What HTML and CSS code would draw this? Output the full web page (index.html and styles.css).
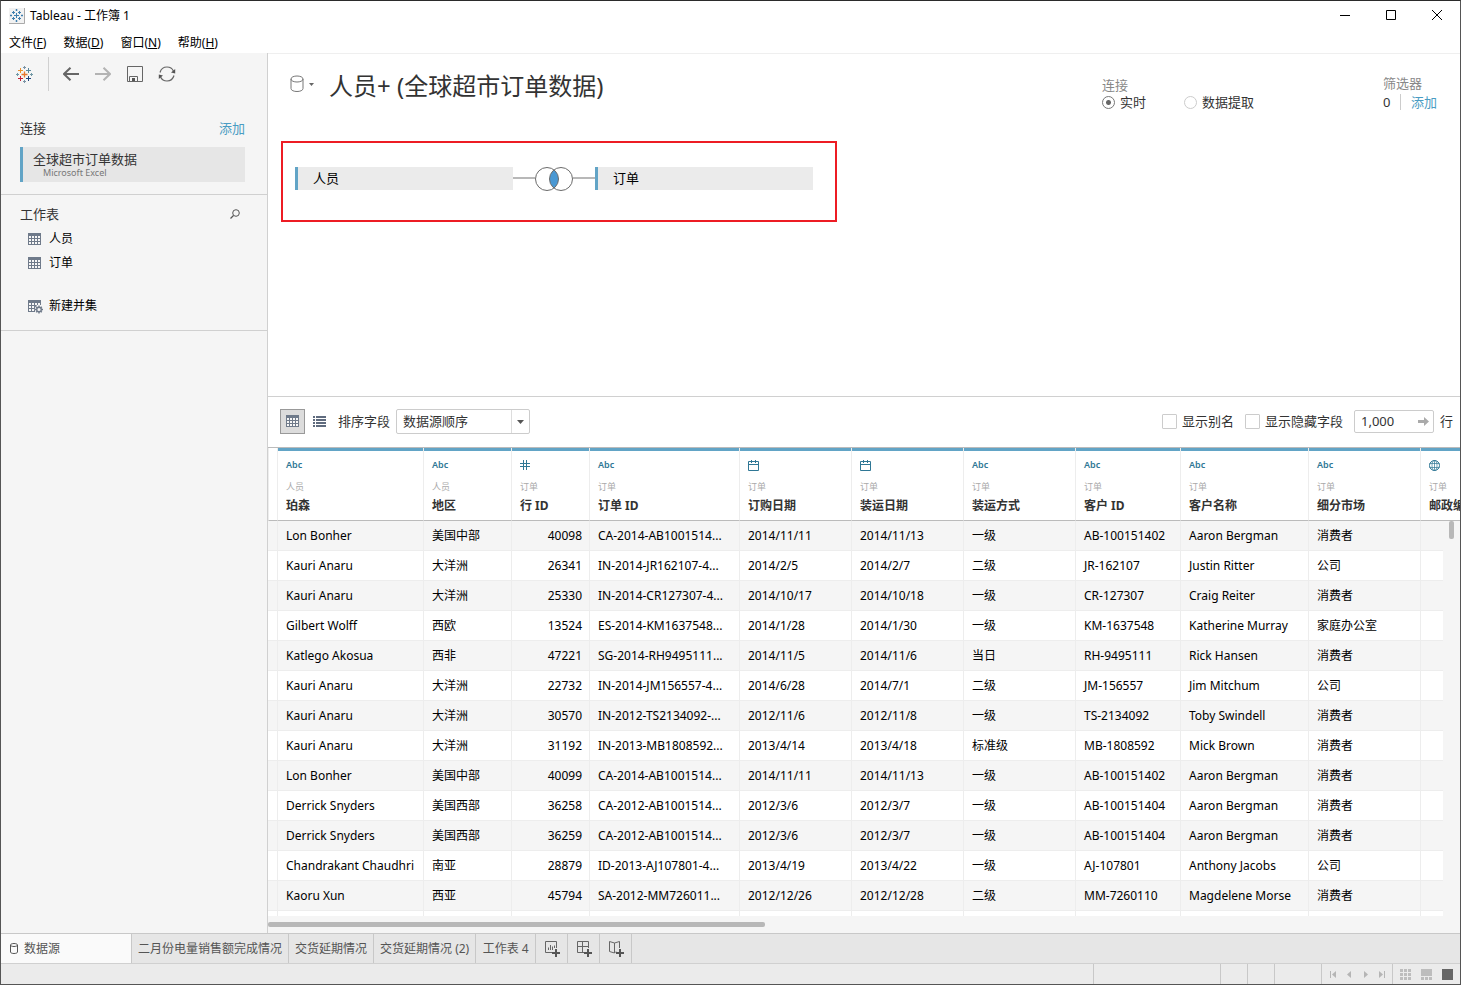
FILE: index.html
```html
<!DOCTYPE html>
<html lang="zh-CN">
<head>
    <meta charset="utf-8">
    <title>Tableau - 工作簿 1</title>
    <link rel="stylesheet" href="styles.css">
</head>
<body>
<svg class="defs" width="0" height="0">
    <symbol id="i-grid" viewBox="0 0 13 12"><path d="M0 0h13v12H0z" fill="#6f7a8a"/><path d="M1 3h2v2H1zM4 3h2v2H4zM7 3h2v2H7zM10 3h2v2h-2zM1 6h2v2H1zM4 6h2v2H4zM7 6h2v2H7zM10 6h2v2h-2zM1 9h2v2H1zM4 9h2v2H4zM7 9h2v2H7zM10 9h2v2h-2z" fill="#f7f7f7"/></symbol>
    <symbol id="i-db" viewBox="0 0 14 18"><path d="M1 4v9.500c0 4 12 4 12 0V4M1 4c0-4 12-4 12 0s-12 4-12 0z" fill="none" stroke="#777"/></symbol>
    <symbol id="i-cal" viewBox="0 0 11 11"><path d="M.5 1.500h10v9H.5zM.5 4.500h10M3.500 0v3M7.500 0v3" fill="none" stroke="#2f7795"/></symbol>
</svg>

<div class="window">
    <header class="titlebar">
        <svg class="app-icon" width="16" height="16" viewBox="0 0 16 16"><path d="M0 0h16v16H0z" fill="#f2f2f2"/><path d="M15.500 0v15.500H0" fill="none" stroke="#aaa"/><path d="M7.500 5v5M5 7.500h5M4.500 3v3M3 4.500h3M10.500 3v3M9 4.500h3M4.500 9v3M3 10.500h3M10.500 9v3M9 10.500h3M7.500 1v2M6.500 2h2M7.500 12v2M6.500 13h2M1 7.500h2M2 6.500v2M12 7.500h2M13 6.500v2" stroke="#3f7fae" fill="none"/></svg>
        <span class="app-title">Tableau - 工作簿 1</span>
        <div class="win-buttons">
            <button aria-label="最小化"><svg width="10" height="10"><path d="M0 5.500h10" stroke="#000"/></svg></button>
            <button aria-label="最大化"><svg width="10" height="10"><path d="M.5.5h9v9h-9z" stroke="#000" fill="none"/></svg></button>
            <button aria-label="关闭"><svg width="10" height="10"><path d="M0 0l10 10M10 0L0 10" stroke="#000"/></svg></button>
        </div>
    </header>

    <nav class="menubar">
        <button>文件(<u>F</u>)</button>
        <button>数据(<u>D</u>)</button>
        <button>窗口(<u>N</u>)</button>
        <button>帮助(<u>H</u>)</button>
    </nav>

    <main class="main">
        <aside class="sidebar">
            <div class="toolbar">
                <button class="logo" aria-label="开始"><svg width="17" height="17" viewBox="0 0 17 17" fill="none" stroke-width="1"><path d="M8.500 5.500v6M5.500 8.500h6" stroke="#e8762d" stroke-width="1.300"/><path d="M4.500 2v5M2 4.500h5" stroke="#eb912c"/><path d="M12.500 2v5M10 4.500h5" stroke="#59879b"/><path d="M4.500 10v5M2 12.500h5" stroke="#c72035"/><path d="M12.500 10v5M10 12.500h5" stroke="#1f457e"/><path d="M8.500 0v3M7 1.500h3M8.500 14v3M7 15.500h3" stroke="#7b94a6"/><path d="M1.500 7v3M0 8.500h3M15.500 7v3M14 8.500h3" stroke="#7199a6"/></svg></button>
                <button class="tool" aria-label="后退"><svg width="16" height="14" viewBox="0 0 16 14"><path d="M16 7H1M7.500.7L1 7l6.500 6.300" fill="none" stroke="#666" stroke-width="2"/></svg></button>
                <button class="tool" aria-label="前进"><svg width="16" height="14" viewBox="0 0 16 14"><path d="M0 7h15M8.500.7L15 7l-6.500 6.300" fill="none" stroke="#b3b3b3" stroke-width="2"/></svg></button>
                <button class="tool" aria-label="保存"><svg width="16" height="16" viewBox="0 0 16 16"><path d="M.5.5h15v15H.5zM2.500 15.500v-5h8v5" fill="none" stroke="#666"/><path d="M5 12h3v3H5z" fill="#555"/></svg></button>
                <button class="tool" aria-label="刷新"><svg width="18" height="16" viewBox="0 0 18 16"><path d="M2 6.500C3 3 6 1 9 1c3 0 5.300 1.400 6.400 4M16 9.500C15 13 12 15 9 15c-3 0-5.300-1.400-6.400-4" fill="none" stroke="#666" stroke-width="1.200"/><path d="M17.200 3v4.500L13 6.500zM.8 13V8.500l4.200 1z" fill="#555"/></svg></button>
            </div>
            <section class="connections">
                <div class="side-head"><span>连接</span><a href="#">添加</a></div>
                <button class="connection"><span>全球超市订单数据</span><small>Microsoft Excel</small></button>
            </section>
            <section class="sheets">
                <div class="side-head"><span>工作表</span><button aria-label="搜索"><svg width="10" height="10" viewBox="0 0 10 10"><circle cx="6" cy="4" r="3.300" fill="none" stroke="#555"/><path d="M3.500 6.500L.5 9.500" stroke="#555" stroke-width="1.300"/></svg></button></div>
                <ul>
                    <li><svg width="13" height="12"><use href="#i-grid"/></svg>人员</li>
                    <li><svg width="13" height="12"><use href="#i-grid"/></svg>订单</li>
                </ul>
                <button class="new-union"><svg width="15" height="15" viewBox="0 0 15 15"><path d="M0 1h13v5H9L7 9v4H0z" fill="#6f7a8a"/><path d="M1 4h2v2H1zM4 4h2v2H4zM7 4h2v2H7zM10 4h2v2h-2zM1 7h2v2H1zM4 7h2v2H4zM1 10h2v2H1zM4 10h2v2H4z" fill="#f7f7f7"/><circle cx="11" cy="10.500" r="3.700" fill="#f5f5f5" stroke="#f5f5f5"/><circle cx="11" cy="10.500" r="2.300" fill="none" stroke="#6f7a8a" stroke-width="1.400"/><path d="M11 6.500v1.500M11 13v1.500M7 10.500h1.500M13.500 10.500H15M8.200 7.700l1 1M12.800 12.300l1 1M13.800 7.700l-1 1M9.200 12.300l-1 1" stroke="#6f7a8a" stroke-width="1.400"/></svg>新建并集</button>
            </section>
        </aside>

        <div class="content">
            <section class="canvas">
                <div class="canvas-head">
                    <button class="ds-menu" aria-label="数据源"><svg width="14" height="18"><use href="#i-db"/></svg><svg width="5" height="3"><path d="M0 0h5L2.500 3z" fill="#666"/></svg></button>
                    <h1>人员+ (全球超市订单数据)</h1>
                    <fieldset class="conn-type">
                        <legend>连接</legend>
                        <label><input type="radio" name="conn" checked>实时</label>
                        <label><input type="radio" name="conn">数据提取</label>
                    </fieldset>
                    <div class="filters">
                        <div class="filters-title">筛选器</div>
                        <div class="filters-row"><span>0</span><a href="#">添加</a></div>
                    </div>
                </div>
                <div class="join-box">
                    <div class="node">人员</div>
                    <button class="join" aria-label="内部联接"><svg width="82" height="26" viewBox="0 0 82 26"><path d="M0 12h22M60 12h22" stroke="#b8b8b8" stroke-width="2"/><circle cx="34" cy="13" r="11.500" fill="#fff"/><circle cx="48" cy="13" r="11.500" fill="#fff"/><path d="M41 3.900a11.500 11.500 0 0 1 0 18.200a11.500 11.500 0 0 1 0-18.200z" fill="#4a98d3"/><circle cx="34" cy="13" r="11.500" fill="none" stroke="#6b6b6b"/><circle cx="48" cy="13" r="11.500" fill="none" stroke="#6b6b6b"/></svg></button>
                    <div class="node">订单</div>
                </div>
            </section>

            <section class="grid">
                <div class="grid-bar">
                    <button class="view active" aria-label="网格"><svg width="13" height="12"><use href="#i-grid"/></svg></button>
                    <button class="view" aria-label="列表"><svg width="13" height="11" viewBox="0 0 13 11"><path d="M0 1h2M3 1h10M0 4h2M3 4h10M0 7h2M3 7h10M0 10h2M3 10h10" stroke="#5f6b7e" stroke-width="2"/></svg></button>
                    <label class="sort-label" for="sort">排序字段</label>
                    <div class="select">
                        <select id="sort"><option>数据源顺序</option></select>
                        <svg width="7" height="4"><path d="M0 0h7L3.500 4z" fill="#555"/></svg>
                    </div>
                    <div class="grid-options">
                        <label><input type="checkbox">显示别名</label>
                        <label><input type="checkbox">显示隐藏字段</label>
                        <div class="row-count">
                            <input type="text" id="rows" value="1,000">
                            <button aria-label="应用"><svg width="11" height="9" viewBox="0 0 11 9"><path d="M0 3h6V0l5 4.500L6 9V6H0z" fill="#aaa"/></svg></button>
                        </div>
                        <label for="rows">行</label>
                    </div>
                </div>

                <div class="table-wrap">
                    <table>
                        <colgroup>
                            <col class="c-gutter"><col class="c-person"><col class="c-region"><col class="c-row"><col class="c-order"><col class="c-mid"><col class="c-mid"><col class="c-mid"><col class="c-cust"><col class="c-name"><col class="c-mid"><col class="c-mid">
                        </colgroup>
                        <thead>
                            <tr>
                                <th class="gutter"></th>
                                <th><span class="type">Abc</span><span class="src">人员</span>珀森</th>
                                <th><span class="type">Abc</span><span class="src">人员</span>地区</th>
                                <th><span class="type"><svg width="10" height="10"><path d="M3.500 0v10M6.500 0v10M0 3.500h10M0 6.500h10" stroke="#2f7795"/></svg></span><span class="src">订单</span>行 ID</th>
                                <th><span class="type">Abc</span><span class="src">订单</span>订单 ID</th>
                                <th><span class="type"><svg width="11" height="11"><use href="#i-cal"/></svg></span><span class="src">订单</span>订购日期</th>
                                <th><span class="type"><svg width="11" height="11"><use href="#i-cal"/></svg></span><span class="src">订单</span>装运日期</th>
                                <th><span class="type">Abc</span><span class="src">订单</span>装运方式</th>
                                <th><span class="type">Abc</span><span class="src">订单</span>客户 ID</th>
                                <th><span class="type">Abc</span><span class="src">订单</span>客户名称</th>
                                <th><span class="type">Abc</span><span class="src">订单</span>细分市场</th>
                                <th><span class="type"><svg width="11" height="11" viewBox="0 0 11 11"><path d="M5.500.5v10M.5 3.500h10M.5 7.500h10" stroke="#2f7795" stroke-width=".7"/><circle cx="5.500" cy="5.500" r="5" fill="none" stroke="#2f7795"/><ellipse cx="5.500" cy="5.500" rx="2.500" ry="5" fill="none" stroke="#2f7795" stroke-width=".7"/></svg></span><span class="src">订单</span>邮政编码</th>
                            </tr>
                        </thead>
                        <tbody>
                            <tr><td></td><td>Lon Bonher</td><td>美国中部</td><td class="num">40098</td><td>CA-2014-AB1001514...</td><td>2014/11/11</td><td>2014/11/13</td><td>一级</td><td>AB-100151402</td><td>Aaron Bergman</td><td>消费者</td><td></td></tr>
                            <tr><td></td><td>Kauri Anaru</td><td>大洋洲</td><td class="num">26341</td><td>IN-2014-JR162107-4...</td><td>2014/2/5</td><td>2014/2/7</td><td>二级</td><td>JR-162107</td><td>Justin Ritter</td><td>公司</td><td></td></tr>
                            <tr><td></td><td>Kauri Anaru</td><td>大洋洲</td><td class="num">25330</td><td>IN-2014-CR127307-4...</td><td>2014/10/17</td><td>2014/10/18</td><td>一级</td><td>CR-127307</td><td>Craig Reiter</td><td>消费者</td><td></td></tr>
                            <tr><td></td><td>Gilbert Wolff</td><td>西欧</td><td class="num">13524</td><td>ES-2014-KM1637548...</td><td>2014/1/28</td><td>2014/1/30</td><td>一级</td><td>KM-1637548</td><td>Katherine Murray</td><td>家庭办公室</td><td></td></tr>
                            <tr><td></td><td>Katlego Akosua</td><td>西非</td><td class="num">47221</td><td>SG-2014-RH9495111...</td><td>2014/11/5</td><td>2014/11/6</td><td>当日</td><td>RH-9495111</td><td>Rick Hansen</td><td>消费者</td><td></td></tr>
                            <tr><td></td><td>Kauri Anaru</td><td>大洋洲</td><td class="num">22732</td><td>IN-2014-JM156557-4...</td><td>2014/6/28</td><td>2014/7/1</td><td>二级</td><td>JM-156557</td><td>Jim Mitchum</td><td>公司</td><td></td></tr>
                            <tr><td></td><td>Kauri Anaru</td><td>大洋洲</td><td class="num">30570</td><td>IN-2012-TS2134092-...</td><td>2012/11/6</td><td>2012/11/8</td><td>一级</td><td>TS-2134092</td><td>Toby Swindell</td><td>消费者</td><td></td></tr>
                            <tr><td></td><td>Kauri Anaru</td><td>大洋洲</td><td class="num">31192</td><td>IN-2013-MB1808592...</td><td>2013/4/14</td><td>2013/4/18</td><td>标准级</td><td>MB-1808592</td><td>Mick Brown</td><td>消费者</td><td></td></tr>
                            <tr><td></td><td>Lon Bonher</td><td>美国中部</td><td class="num">40099</td><td>CA-2014-AB1001514...</td><td>2014/11/11</td><td>2014/11/13</td><td>一级</td><td>AB-100151402</td><td>Aaron Bergman</td><td>消费者</td><td></td></tr>
                            <tr><td></td><td>Derrick Snyders</td><td>美国西部</td><td class="num">36258</td><td>CA-2012-AB1001514...</td><td>2012/3/6</td><td>2012/3/7</td><td>一级</td><td>AB-100151404</td><td>Aaron Bergman</td><td>消费者</td><td></td></tr>
                            <tr><td></td><td>Derrick Snyders</td><td>美国西部</td><td class="num">36259</td><td>CA-2012-AB1001514...</td><td>2012/3/6</td><td>2012/3/7</td><td>一级</td><td>AB-100151404</td><td>Aaron Bergman</td><td>消费者</td><td></td></tr>
                            <tr><td></td><td>Chandrakant Chaudhri</td><td>南亚</td><td class="num">28879</td><td>ID-2013-AJ107801-4...</td><td>2013/4/19</td><td>2013/4/22</td><td>一级</td><td>AJ-107801</td><td>Anthony Jacobs</td><td>公司</td><td></td></tr>
                            <tr><td></td><td>Kaoru Xun</td><td>西亚</td><td class="num">45794</td><td>SA-2012-MM726011...</td><td>2012/12/26</td><td>2012/12/28</td><td>二级</td><td>MM-7260110</td><td>Magdelene Morse</td><td>消费者</td><td></td></tr>
                            <tr><td></td><td></td><td></td><td></td><td></td><td></td><td></td><td></td><td></td><td></td><td></td><td></td></tr>
                        </tbody>
                    </table>
                    <div class="vscroll"><div class="vthumb"></div></div>
                </div>
                <div class="hscroll"><div class="hthumb"></div></div>
            </section>
        </div>
    </main>

    <nav class="tabs">
        <button class="tab source"><svg width="8" height="11" viewBox="0 0 8 11"><path d="M.5 2v7c0 2 7 2 7 0V2M.5 2c0-2 7-2 7 0s-7 2-7 0z" fill="none" stroke="#555"/></svg>数据源</button>
        <button class="tab">二月份电量销售额完成情况</button>
        <button class="tab">交货延期情况</button>
        <button class="tab">交货延期情况 (2)</button>
        <button class="tab">工作表 4</button>
        <button class="tab add" aria-label="新建工作表"><svg width="16" height="16" viewBox="0 0 16 16"><path d="M9 11.500H1.500V.5h11V7M4.500 9V6.500M6.500 9V4M8.500 9V5.500M10.500 7V4.500" fill="none" stroke="#666"/><path d="M12 8v8M8 12h8" stroke="#555" stroke-width="2"/></svg></button>
        <button class="tab add" aria-label="新建仪表板"><svg width="16" height="16" viewBox="0 0 16 16"><path d="M8 11.500H1.500V.5h11V7M6.500.5v11M1.500 5.500h11" fill="none" stroke="#666"/><path d="M12 8v8M8 12h8" stroke="#555" stroke-width="2"/></svg></button>
        <button class="tab add" aria-label="新建故事"><svg width="16" height="16" viewBox="0 0 16 16"><path d="M8 10.500L6.500 12 1.500 10.500V.5L6.500 2l5-1.500V7M6.500 2v10" fill="none" stroke="#666"/><path d="M12 8v8M8 12h8" stroke="#555" stroke-width="2"/></svg></button>
    </nav>

    <footer class="status">
        <div class="cell wide"></div>
        <div class="cell narrow"></div>
        <div class="cell narrow"></div>
        <div class="cell medium"></div>
        <div class="cell pager">
            <button aria-label="第一个"><svg width="7" height="7"><path d="M.5 0v7" stroke="#b5b5b5"/><path d="M6 0v7L2 3.500z" fill="#b5b5b5"/></svg></button>
            <button aria-label="上一个"><svg width="7" height="7"><path d="M5 0v7L1 3.500z" fill="#b5b5b5"/></svg></button>
            <button aria-label="下一个"><svg width="7" height="7"><path d="M2 0v7l4-3.500z" fill="#b5b5b5"/></svg></button>
            <button aria-label="最后一个"><svg width="7" height="7"><path d="M6.500 0v7" stroke="#b5b5b5"/><path d="M1 0v7l4-3.500z" fill="#b5b5b5"/></svg></button>
        </div>
        <div class="cell modes">
            <button aria-label="缩略图"><svg width="11" height="11"><path d="M0 0h3v3H0zM4 0h3v3H4zM8 0h3v3H8zM0 4h3v3H0zM4 4h3v3H4zM8 4h3v3H8zM0 8h3v3H0zM4 8h3v3H4zM8 8h3v3H8z" fill="#bdbdbd"/></svg></button>
            <button aria-label="胶片"><svg width="11" height="11"><path d="M0 0h11v7H0zM0 8h3v3H0zM4 8h3v3H4zM8 8h3v3H8z" fill="#bdbdbd"/></svg></button>
            <button aria-label="单页"><svg width="11" height="11"><path d="M0 0h11v11H0z" fill="#666"/></svg></button>
        </div>
    </footer>
</div>
</body>
</html>
```
FILE: styles.css
```css
* {
    box-sizing: border-box;
}

body {
    margin: 0;
    font-family: "Noto Sans", "Noto Sans CJK SC", sans-serif;
    font-size: 12px;
    line-height: 16px;
    color: #333;
    background-color: #fff;
}

button {
    display: flex;
    align-items: center;
    justify-content: center;
    margin: 0;
    padding: 0;
    border: 0;
    background: none;
    font: inherit;
    color: inherit;
}

input, select {
    margin: 0;
    font: inherit;
    color: inherit;
}

a {
    color: #4a9cc3;
    text-decoration: none;
}

svg {
    display: block;
    flex: none;
}

.defs {
    position: absolute;
}

.window {
    display: flex;
    flex-direction: column;
    height: 100vh;
    border: 1px solid #555;
    border-top-color: #2b2b2b;
}

/* title bar and menu */
.titlebar {
    display: flex;
    align-items: center;
    height: 29px;
    padding-left: 8px;
    color: #000;
}

.app-title {
    margin-left: 5px;
}

.win-buttons {
    display: flex;
    align-self: flex-start;
    margin-left: auto;
}

.win-buttons button {
    width: 46px;
    height: 28px;
}

.menubar {
    display: flex;
    gap: 17px;
    height: 23px;
    padding: 2px 0 0 8px;
    color: #000;
}

/* left pane */
.main {
    display: flex;
    flex: 1;
    min-height: 0;
}

.sidebar {
    width: 267px;
    flex: none;
    background-color: #f5f5f5;
    border-right: 1px solid #d0d0d0;
    font-size: 13px;
}

.toolbar {
    display: flex;
    align-items: center;
    height: 42px;
}

.logo {
    width: 48px;
    height: 34px;
    border-right: 1px solid #d0d0d0;
}

.tool {
    width: 32px;
    height: 32px;
}

.logo + .tool {
    margin-left: 6px;
}

.connections {
    padding: 23px 22px 12px 19px;
    border-bottom: 1px solid #d0d0d0;
}

.side-head {
    display: flex;
    align-items: center;
    justify-content: space-between;
    height: 20px;
}

.connection {
    flex-direction: column;
    align-items: flex-start;
    width: 100%;
    height: 35px;
    margin-top: 9px;
    padding-left: 10px;
    border-left: 3px solid #62a4c6;
    background-color: #e6e6e6;
}

.connection small {
    padding-left: 10px;
    font-size: 9px;
    line-height: 12px;
    color: #777;
}

.sheets {
    padding: 7px 27px 12px 19px;
    border-bottom: 1px solid #d0d0d0;
}

.sheets .side-head {
    height: 24px;
}

.sheets ul {
    margin: 0;
    padding: 1px 0 0;
    list-style: none;
}

.sheets li, .new-union {
    display: flex;
    align-items: center;
    height: 24px;
    padding-left: 8px;
    gap: 8px;
    font-size: 12px;
    color: #000;
}

.new-union {
    gap: 6px;
    margin-top: 19px;
}

/* join canvas */
.content {
    display: flex;
    flex-direction: column;
    flex: 1;
    min-width: 0;
}

.canvas {
    height: 344px;
    flex: none;
    padding: 0 23px 0 13px;
    border-top: 1px solid #efefef;
    border-bottom: 1px solid #d0d0d0;
}

.canvas-head {
    display: flex;
    height: 87px;
    padding-top: 20px;
}

.ds-menu {
    height: 20px;
    margin-left: 9px;
    gap: 5px;
}

h1 {
    margin: 0 auto 0 15px;
    font-size: 24px;
    font-weight: normal;
    line-height: 24px;
}

.conn-type {
    display: grid;
    grid-template-columns: 82px auto;
    align-content: start;
    margin: 0;
    padding: 0;
    border: 0;
    font-size: 13px;
}

.conn-type legend {
    padding: 3px 0 1px;
    color: #888;
}

.conn-type label {
    display: flex;
    align-items: center;
    gap: 5px;
}

.conn-type input {
    appearance: none;
    width: 13px;
    height: 13px;
    border: 1px solid #ccc;
    border-radius: 50%;
}

.conn-type input:checked {
    border-color: #777;
    background: radial-gradient(circle, #666 0 2px, #fff 3px);
}

.filters {
    margin-left: 129px;
    padding-top: 1px;
    font-size: 13px;
}

.filters-title {
    color: #888;
}

.filters-row {
    display: flex;
    justify-content: space-between;
    margin-top: 3px;
}

.filters-row a {
    padding-left: 10px;
    border-left: 1px solid #ccc;
}

.filters-row span {
    width: 17px;
}

.join-box {
    display: flex;
    width: fit-content;
    padding: 24px 22px 30px 12px;
    border: 2px solid #ed1c24;
}

.node {
    width: 218px;
    height: 23px;
    padding-left: 15px;
    border-left: 3px solid #62a4c6;
    background-color: #ebebeb;
    font-size: 13px;
    line-height: 23px;
    color: #000;
}

.join {
    height: 23px;
}

/* data grid */
.grid {
    display: flex;
    flex-direction: column;
    flex: 1;
    min-height: 0;
}

.grid-bar {
    display: flex;
    align-items: center;
    height: 51px;
    flex: none;
    padding: 0 7px 2px 12px;
    border-bottom: 1px solid #bbb;
    font-size: 13px;
}

.view {
    width: 25px;
    height: 25px;
    margin-right: 2px;
}

.view.active {
    border: 1px solid #999;
    background-color: #dcdcdc;
}

.sort-label {
    margin: 0 6px 0 4px;
}

.select {
    position: relative;
    width: 134px;
    height: 25px;
    border: 1px solid #ccc;
    border-radius: 2px;
}

.select select {
    appearance: none;
    width: 115px;
    height: 23px;
    padding: 0 6px;
    border: 0;
    border-right: 1px solid #ddd;
    background: none;
}

.select svg {
    position: absolute;
    right: 5px;
    top: 10px;
}

.grid-options {
    display: flex;
    align-items: center;
    margin-left: auto;
}

.grid-options label {
    display: flex;
    align-items: center;
    gap: 5px;
    margin-right: 11px;
}

.grid-options label:last-child {
    margin: 0 0 0 6px;
}

.grid-options input[type="checkbox"] {
    appearance: none;
    width: 15px;
    height: 15px;
    border: 1px solid #ccc;
    border-radius: 1px;
}

.row-count {
    display: flex;
    width: 80px;
    height: 23px;
    border: 1px solid #ccc;
    border-radius: 2px;
}

.row-count input {
    flex: 1;
    min-width: 0;
    padding: 0 0 0 6px;
    border: 0;
    background: none;
}

.row-count button {
    width: 18px;
}

.table-wrap {
    position: relative;
    flex: 1;
    min-height: 0;
    overflow: hidden;
}

table {
    table-layout: fixed;
    width: 1265px;
    border-collapse: separate;
    border-spacing: 0;
}

.c-gutter { width: 10px; }
.c-person { width: 146px; }
.c-region { width: 88px; }
.c-row { width: 78px; }
.c-order { width: 150px; }
.c-mid { width: 112px; }
.c-cust { width: 105px; }
.c-name { width: 128px; }

th, td {
    border-right: 1px solid #ededed;
    padding: 0 8px;
    text-align: left;
    white-space: nowrap;
}

th {
    height: 73px;
    padding-top: 8px;
    border-bottom: 1px solid #bbb;
    box-shadow: inset 0 3px #62a4c6;
    vertical-align: top;
    line-height: 12px;
}

th.gutter {
    border-left: 1px solid #ededed;
    box-shadow: none;
    padding: 0;
}

.type, .src {
    display: flex;
    align-items: center;
    height: 18px;
    font-size: 9px;
    font-weight: 600;
    color: #2f7795;
}

.src {
    height: 26px;
    font-weight: normal;
    color: #aaa;
}

td {
    height: 30px;
    border-bottom: 1px solid #ededed;
    color: #000;
}

td:first-child {
    padding: 0;
}

tbody tr:nth-child(odd) {
    background-color: #f5f5f5;
}

.num {
    padding-right: 7px;
    text-align: right;
}

.vscroll {
    position: absolute;
    top: 73px;
    right: 0;
    bottom: 0;
    width: 17px;
    background-color: #f5f5f5;
}

.vthumb {
    width: 5px;
    height: 18px;
    margin: 0 auto;
    border-radius: 2px;
    background-color: #b8b8b8;
}

.hscroll {
    height: 17px;
    padding-top: 6px;
    background-color: #f5f5f5;
}

.hthumb {
    width: 497px;
    height: 5px;
    border-radius: 2px;
    background-color: #b8b8b8;
}

/* bottom tabs and status bar */
.tabs {
    display: flex;
    height: 30px;
    flex: none;
    border-top: 1px solid #c8c8c8;
    background-color: #e6e6e6;
    color: #555;
}

.tab {
    min-width: 60px;
    padding: 0 6px;
    border-right: 1px solid #c8c8c8;
    white-space: nowrap;
}

.tab.source {
    justify-content: flex-start;
    gap: 6px;
    width: 131px;
    padding-left: 9px;
    background-color: #fafafa;
}

.tab.add {
    width: 32px;
    min-width: 0;
    padding: 0;
}

.status {
    display: flex;
    justify-content: flex-end;
    height: 21px;
    flex: none;
    border-top: 1px solid #d0d0d0;
    background-color: #ebebeb;
}

.cell {
    display: flex;
    align-items: center;
    justify-content: center;
    border-left: 1px solid #c8c8c8;
}

.wide { width: 127px; }
.narrow { width: 27px; }
.medium { width: 47px; }
.pager { width: 71px; }

.modes {
    gap: 5px;
    width: 68px;
}

.pager button, .modes button {
    width: 16px;
}
```
